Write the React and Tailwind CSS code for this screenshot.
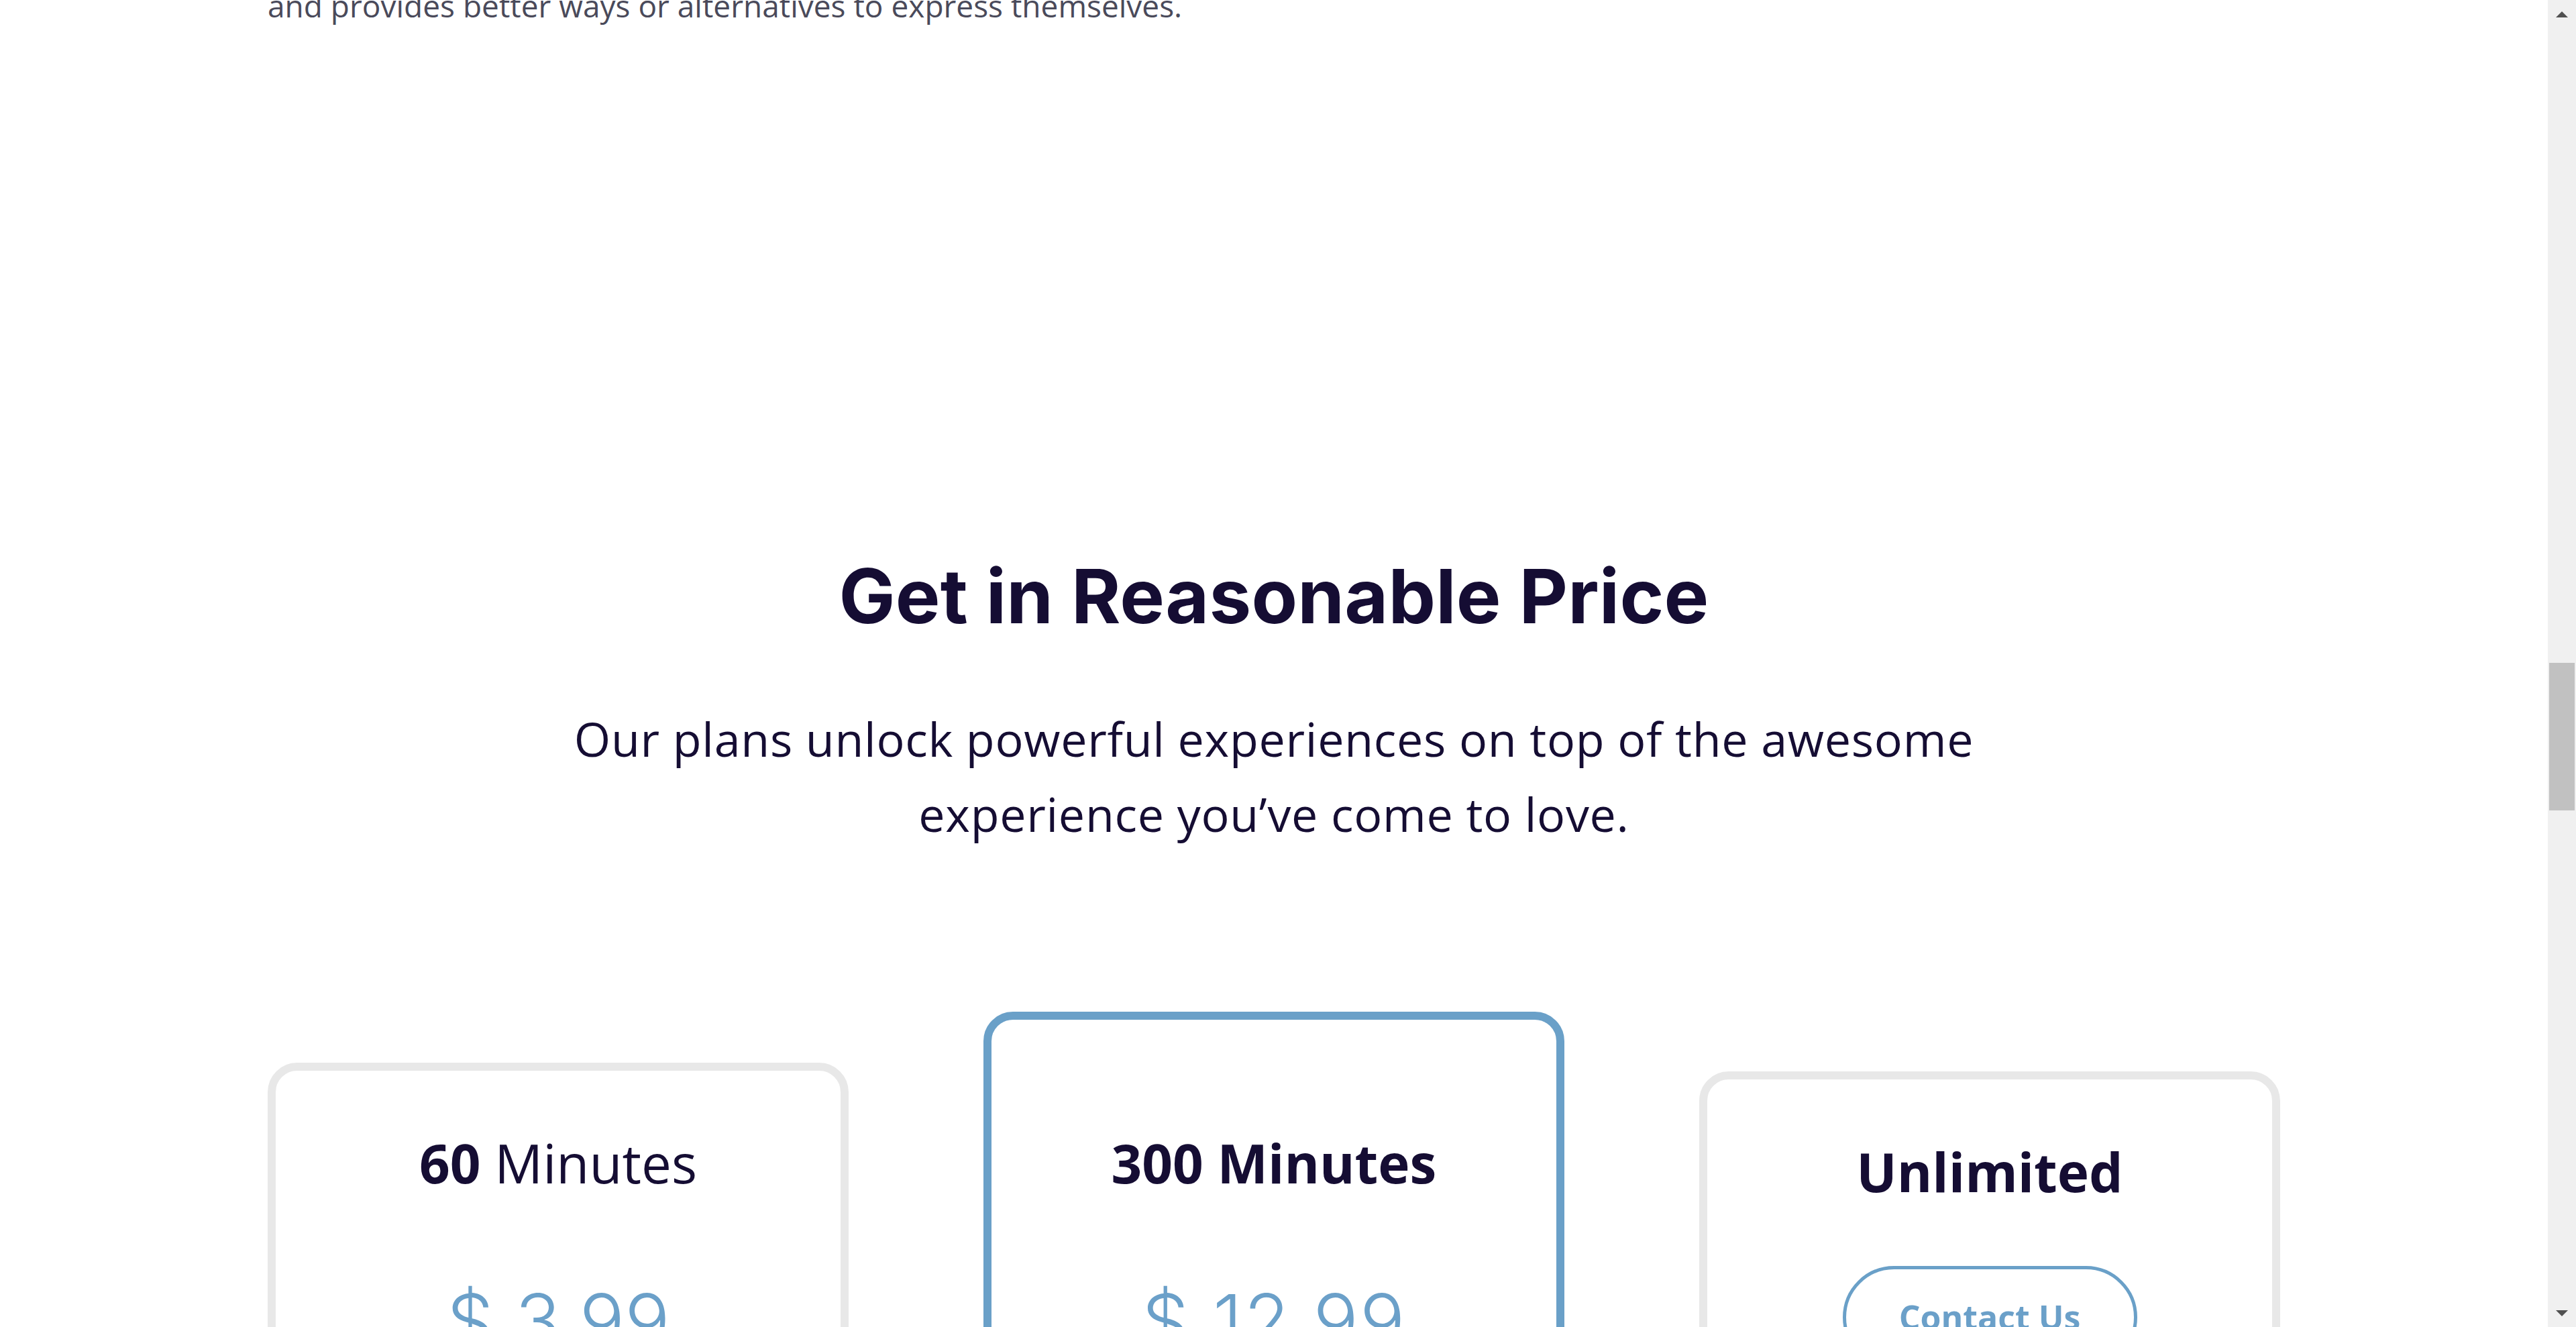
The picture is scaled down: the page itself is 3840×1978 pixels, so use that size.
import React from "react";

function Card({ children, className }) {
  return (
    <div className={"w-[866px] shrink-0 bg-white border-[12px] border-solid " + className}>
      {children}
    </div>
  );
}

export default function App() {
  return (
    <div className="flex h-[1978px] w-full overflow-hidden bg-white">
      <main className="flex min-w-0 flex-1 flex-col items-center font-['Open_Sans',sans-serif]">
        <div className="-mt-[26px] w-[3000px]">
          <p className="text-[46px] leading-[68px] text-[#4a4a5a]">
            and provides better ways or alternatives to express themselves.
          </p>
        </div>

        <h2 className="mt-[779px] text-center font-['Inter',sans-serif] text-[112px] font-bold leading-[134px] tracking-[0.2px] text-[#150d33]">
          Get in Reasonable Price
        </h2>

        <p className="mt-[90px] w-[2200px] text-center text-[70px] leading-[112px] tracking-[0.7px] text-[#150d33]">
          Our plans unlock powerful experiences on top of the awesome experience you’ve come to love.
        </p>

        <div className="mt-[239px] flex w-[3000px] items-start gap-[201px]">
          <Card className="mt-[76px] rounded-[44px] border-[#e8e8e8] pt-[82px] pb-[120px]">
            <h3 className="text-center text-[80px] leading-[110px] text-[#150d33]">
              <span className="font-bold">60</span> Minutes
            </h3>
            <div className="mt-[109px] text-center font-['Inter',sans-serif] text-[112px] font-light leading-[144px] text-[#6ba0c9]">
              $ 3.99
            </div>
          </Card>

          <Card className="rounded-[44px] border-[#6aa0c8] pt-[158px] pb-[196px]">
            <h3 className="text-center text-[80px] font-bold leading-[110px] text-[#150d33]">
              300 Minutes
            </h3>
            <div className="mt-[109px] text-center font-['Inter',sans-serif] text-[112px] font-light leading-[144px] tracking-[2px] text-[#6ba0c9]">
              $ 12.99
            </div>
          </Card>

          <Card className="mt-[89px] rounded-[44px] border-[#e8e8e8] pt-[82px] pb-[120px]">
            <h3 className="text-center text-[80px] font-bold leading-[110px] text-[#150d33]">
              Unlimited
            </h3>
            <div className="mt-[86px] flex justify-center">
              <button className="w-[439px] rounded-full border-[5px] border-solid border-[#6aa0c8] bg-white pt-[34px] pb-[34px] text-center text-[50px] font-bold leading-[75px] text-[#6ba0c9]">
                Contact Us
              </button>
            </div>
          </Card>
        </div>
      </main>

      <aside className="flex h-full w-[42px] shrink-0 flex-col items-center bg-[#f0f0f0]">
        <div className="flex h-[42px] w-full items-center justify-center">
          <svg width="18" height="9" viewBox="0 0 18 9">
            <polygon points="9,0 18,9 0,9" fill="#505050" />
          </svg>
        </div>
        <div className="mt-[946px] h-[220px] w-[38px] bg-[#c1c1c1]" />
        <div className="flex-1" />
        <div className="flex h-[42px] w-full items-center justify-center">
          <svg width="18" height="9" viewBox="0 0 18 9">
            <polygon points="0,0 18,0 9,9" fill="#505050" />
          </svg>
        </div>
      </aside>
    </div>
  );
}
